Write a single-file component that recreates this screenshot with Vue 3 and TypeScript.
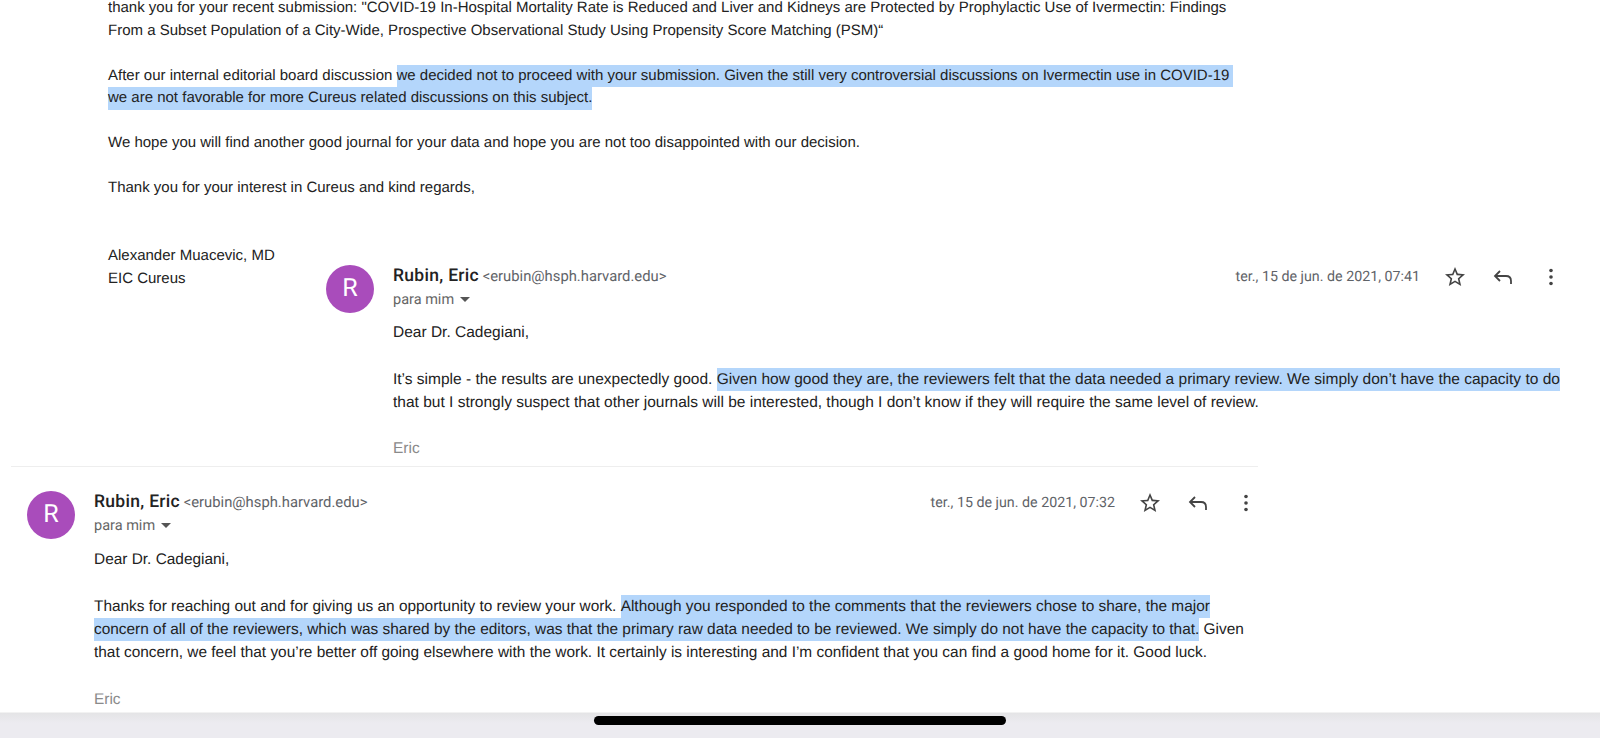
<script setup lang="ts">
interface Segment { text: string; selected?: boolean }
interface EmailMessage {
  date: string
  cls: string
  greeting: string
  lines: Segment[][]
}
const messages: EmailMessage[] = [
  {
    cls: 'second',
    date: 'ter., 15 de jun. de 2021, 07:41',
    greeting: 'Dear Dr. Cadegiani,',
    lines: [
      [
        { text: 'It’s simple - the results are unexpectedly good. ' },
        { text: 'Given how good they are, the reviewers felt that the data needed a primary review. We simply don’t have the capacity to do', selected: true },
      ],
      [{ text: 'that but I strongly suspect that other journals will be interested, though I don’t know if they will require the same level of review.' }],
    ],
  },
  {
    cls: 'third',
    date: 'ter., 15 de jun. de 2021, 07:32',
    greeting: 'Dear Dr. Cadegiani,',
    lines: [
      [
        { text: 'Thanks for reaching out and for giving us an opportunity to review your work. ' },
        { text: 'Although you responded to the comments that the reviewers chose to share, the major', selected: true },
      ],
      [
        { text: 'concern of all of the reviewers, which was shared by the editors, was that the primary raw data needed to be reviewed. We simply do not have the capacity to that.', selected: true },
        { text: ' Given' },
      ],
      [{ text: 'that concern, we feel that you’re better off going elsewhere with the work. It certainly is interesting and I’m confident that you can find a good home for it. Good luck.' }],
    ],
  },
]
</script>

<template>
  <div class="page">
    <main class="canvas">
      <section class="letter">
        <p>
          <span class="line">thank you for your recent submission: "COVID-19 In-Hospital Mortality Rate is Reduced and Liver and Kidneys are Protected by Prophylactic Use of Ivermectin: Findings</span>
          <span class="line">From a Subset Population of a City-Wide, Prospective Observational Study Using Propensity Score Matching (PSM)“</span>
        </p>
        <p>
          <span class="line">After our internal editorial board discussion <span class="sel trail">we decided not to proceed with your submission. Given the still very controversial discussions on Ivermectin use in COVID-19</span></span>
          <span class="line"><span class="sel">we are not favorable for more Cureus related discussions on this subject.</span></span>
        </p>
        <p><span class="line">We hope you will find another good journal for your data and hope you are not too disappointed with our decision.</span></p>
        <p class="signoff"><span class="line">Thank you for your interest in Cureus and kind regards,</span></p>
        <p>
          <span class="line">Alexander Muacevic, MD</span>
          <span class="line">EIC Cureus</span>
        </p>
      </section>

      <article v-for="m in messages" :key="m.date" class="message" :class="m.cls">
        <div class="avatar">R</div>
        <div class="content">
          <header class="head">
            <div class="sender">
              <div class="from"><strong>Rubin, Eric</strong> <span class="addr">&lt;erubin@hsph.harvard.edu&gt;</span></div>
              <div class="to">para mim <i class="caret"></i></div>
            </div>
            <div class="meta">
              <span class="date">{{ m.date }}</span>
              <svg class="icon" viewBox="0 0 24 24"><path d="M22 9.24l-7.19-.62L12 2 9.19 8.63 2 9.24l5.46 4.73L5.820 21 12 17.27 18.18 21l-1.63-7.03L22 9.24zM12 15.4l-3.76 2.27 1-4.28-3.32-2.88 4.38-.38L12 6.1l1.71 4.04 4.38.38-3.32 2.88 1 4.28L12 15.4z"/></svg>
              <svg class="icon" viewBox="0 0 24 24"><path class="reply" d="M9 6 L4 11 L9 16 M4.500 11 H15 C18 11 20 13 20 16 V19"/></svg>
              <svg class="icon" viewBox="0 0 24 24"><circle cx="12" cy="5.500" r="1.800"/><circle cx="12" cy="12" r="1.800"/><circle cx="12" cy="18.500" r="1.800"/></svg>
            </div>
          </header>
          <div class="body">
            <p class="greeting"><span class="line">{{ m.greeting }}</span></p>
            <p class="para">
              <span v-for="(l, i) in m.lines" :key="i" class="line"><span v-for="(s, j) in l" :key="j" :class="{ sel: s.selected }">{{ s.text }}</span></span>
            </p>
            <p class="sig"><span class="line">Eric</span></p>
          </div>
        </div>
      </article>
    </main>
    <footer class="home-bar"><div class="pill"></div></footer>
  </div>
</template>

<style>
html, body { margin: 0; background: #fff; }
</style>

<style scoped>
.page {
  width: 1600px;
  height: 738px;
  display: flex;
  flex-direction: column;
  overflow: hidden;
  font-family: "Liberation Sans", Arial, sans-serif;
  font-size: 15px;
  color: #222;
  background: #fff;
  text-rendering: geometricPrecision;
}
.canvas { flex: 1; min-height: 0; overflow: hidden; }
p { margin: 0 0 22.5px; }
.line { display: block; height: 22.6px; line-height: 22.6px; white-space: nowrap; }
.sel { display: inline-block; background: #b4d6fb; }
.trail { padding-right: 4px; }
.letter { margin: -3px 0 0 108px; }
.signoff { margin-bottom: 45px; }
.message { display: flex; gap: 19px; }
.second { margin: -48px 0 0 326px; padding-bottom: 6px; width: 1237px; font-size: 15.5px; }
.third {
  margin: 0 0 0 11px;
  padding: 24px 0 0 16px;
  width: 1231px;
  border-top: 1px solid #eee;
  font-size: 15.42px;
}
.message .line { height: 23.3px; line-height: 23.3px; }
.avatar {
  flex: none;
  width: 48px;
  height: 48px;
  border-radius: 50%;
  background: #a94cbb;
  color: #fff;
  font: 25px/48px Roboto, "Liberation Sans", sans-serif;
  text-align: center;
}
.content { flex: 1; min-width: 0; }
.head { display: flex; justify-content: space-between; align-items: flex-start; height: 56px; }
.third .head { height: 57px; }
.from { font-family: Roboto, sans-serif; font-size: 14.8px; line-height: 23px; color: #5f6368; }
.from strong { font-size: 17.5px; letter-spacing: 0.3px; font-weight: 500; color: #222; }
.to { font-family: Roboto, sans-serif; font-size: 14.5px; line-height: 24px; color: #666; }
.caret {
  display: inline-block;
  width: 0;
  height: 0;
  margin: 0 0 2px 2px;
  border: 5px solid transparent;
  border-top: 5px solid #555;
  border-bottom: 0;
}
.meta { display: flex; align-items: center; height: 24px; }
.date { font-family: Roboto, sans-serif; font-size: 14.25px; color: #5f6368; margin-right: 23px; }
.icon { width: 24px; height: 24px; fill: #444; margin-right: 24px; }
.icon:last-child { margin-right: 0; }
.reply { fill: none; stroke: #444; stroke-width: 1.8; }
.greeting { margin-bottom: 23.5px; }
.third .para { margin-bottom: 23.5px; }
.body p:last-child { margin: 0; }
.sig { color: #8a8a8a; }
.home-bar {
  flex: none;
  height: 26px;
  position: relative;
  background: linear-gradient(#e4e4e6, #ecebf0 10px);
  border-top: 1px solid #f2f2f2;
  box-sizing: border-box;
}
.pill {
  position: absolute;
  left: 594px;
  top: 3px;
  width: 412px;
  height: 9px;
  border-radius: 5px;
  background: #000;
}
</style>
